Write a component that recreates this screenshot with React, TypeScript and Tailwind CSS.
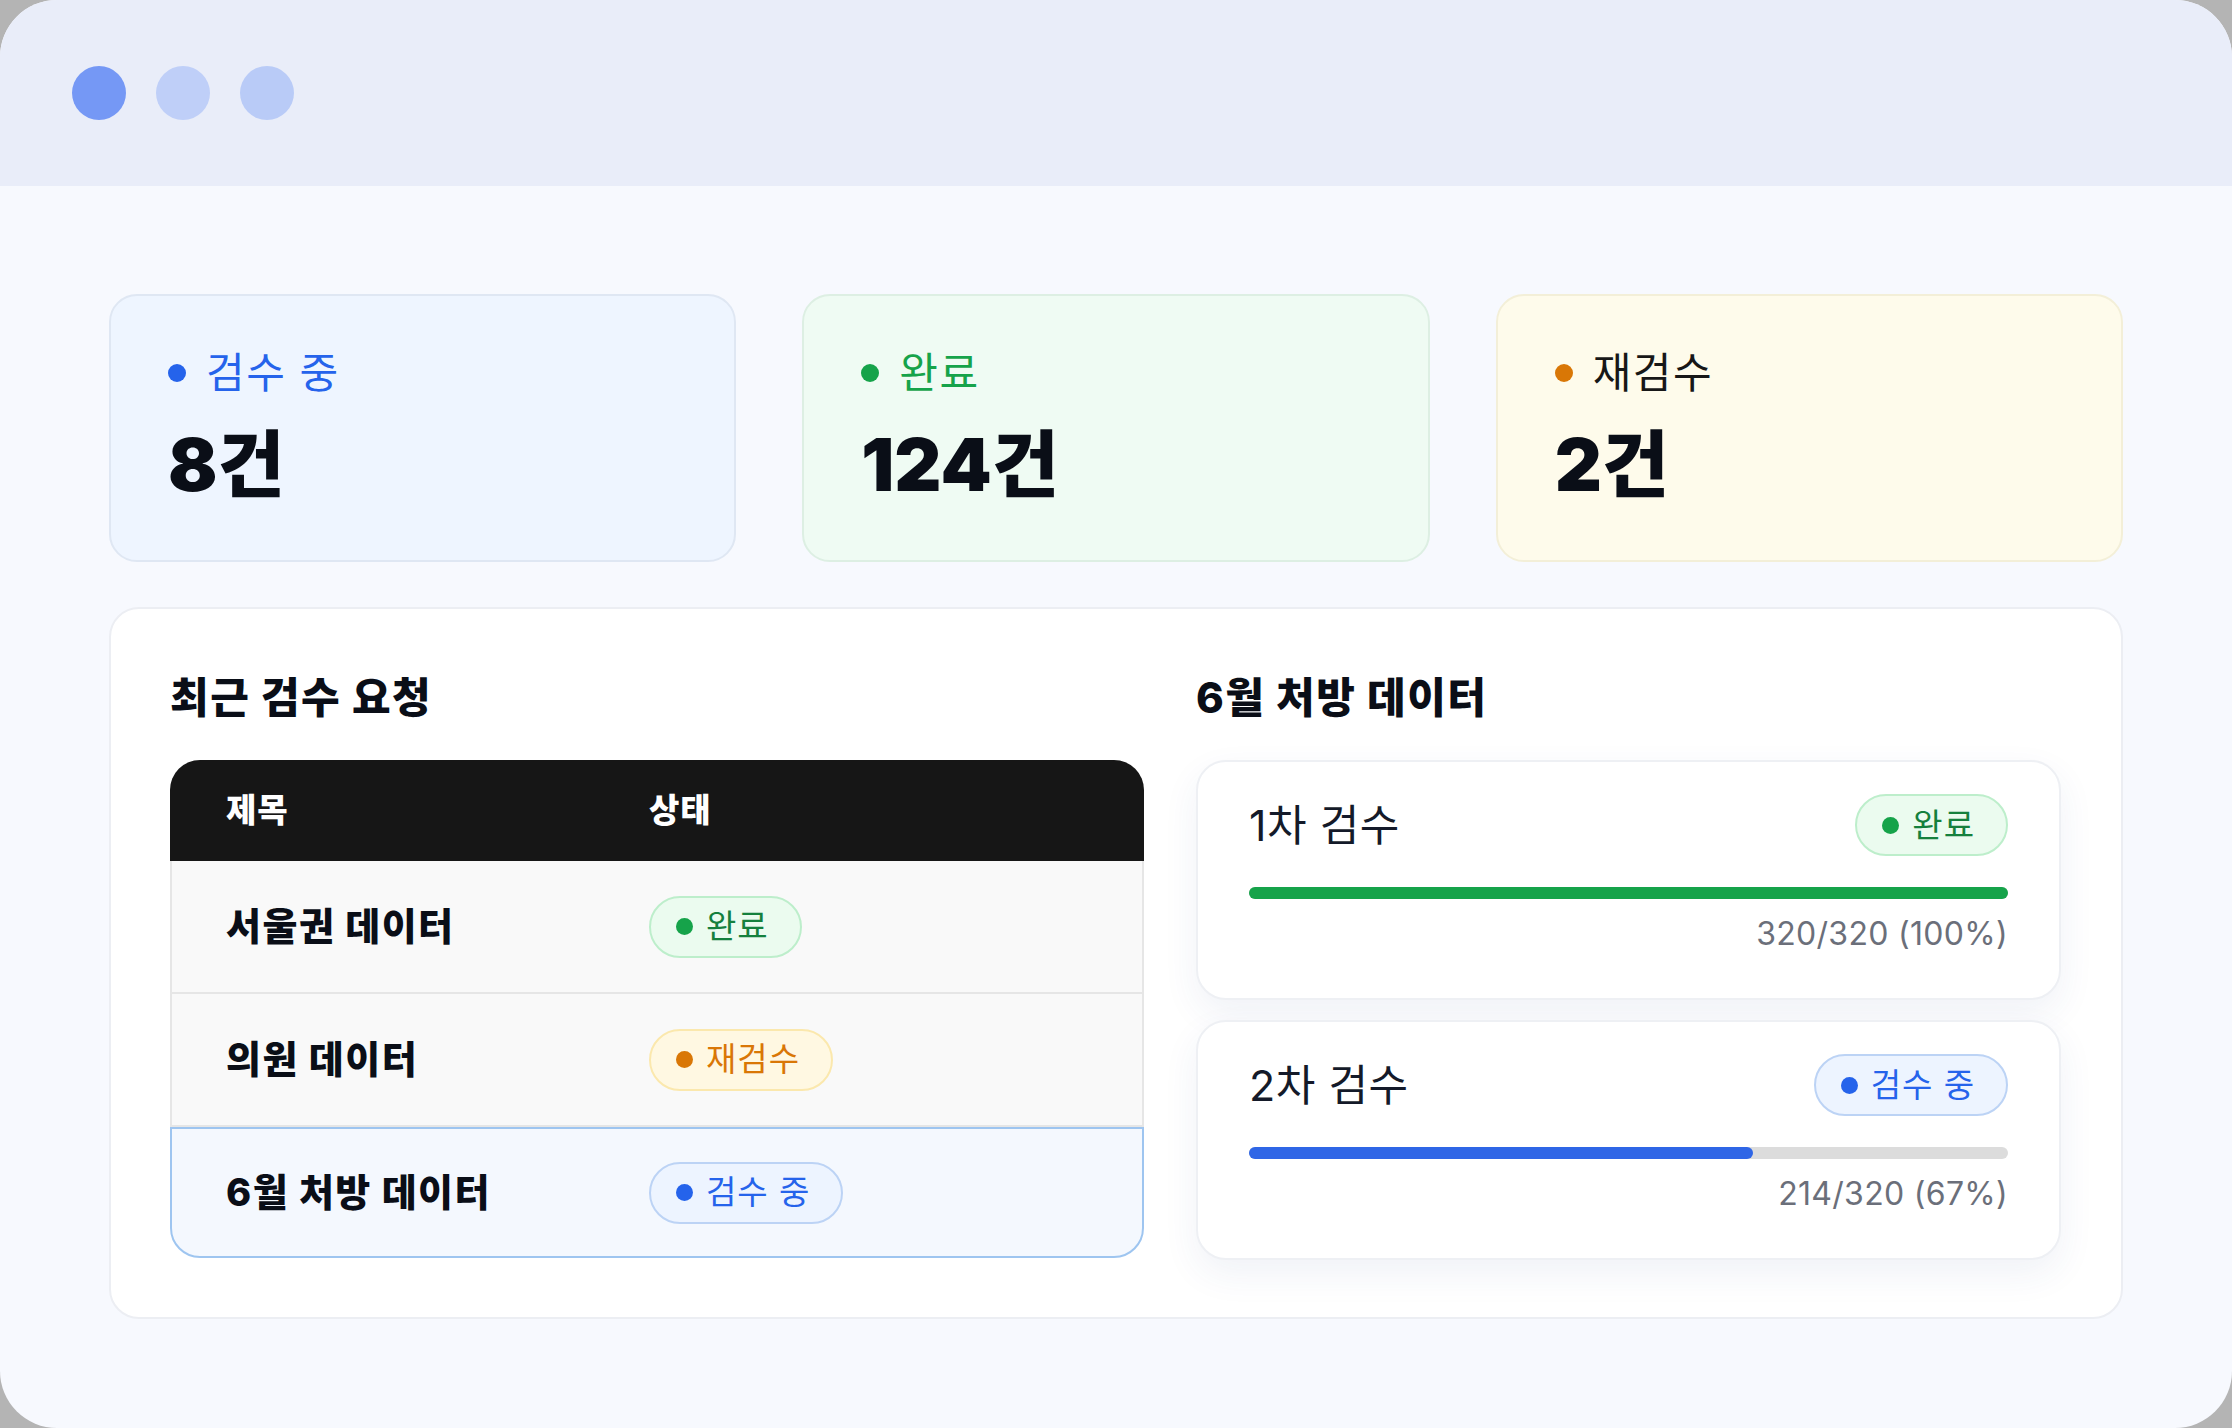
const font = { fontFamily: 'Inter, "Noto Sans CJK KR", "Noto Sans", sans-serif' };

type Tone = "green" | "amber" | "blue";

const badgeStyles: Record<Tone, { box: string; dot: string; text: string }> = {
  green: { box: "bg-[#ebfbef] border-[#bdeecb]", dot: "bg-[#16a34a]", text: "text-[#15803d]" },
  amber: { box: "bg-[#fff8e2] border-[#fbe8ad]", dot: "bg-[#d97706]", text: "text-[#d97706]" },
  blue: { box: "bg-[#edf4ff] border-[#bcd3f5]", dot: "bg-[#2563eb]", text: "text-[#2563eb]" },
};

function Badge({ tone, label }: { tone: Tone; label: string }) {
  const s = badgeStyles[tone];
  return (
    <span className={`inline-flex h-[62px] items-center gap-[13px] rounded-full border-2 pl-[25px] pr-[31px] ${s.box}`}>
      <span className={`h-[17px] w-[17px] rounded-full ${s.dot}`} />
      <span className={`text-[33px] leading-none tracking-[1px] ${s.text}`}>{label}</span>
    </span>
  );
}

function StatCard({ label, value, box, dot, text }: { label: string; value: string; box: string; dot: string; text: string }) {
  return (
    <div className={`h-[268px] rounded-[28px] border-2 pl-[57px] pt-[53px] ${box}`}>
      <div className="flex items-center gap-[20px]">
        <span className={`h-[18px] w-[18px] rounded-full ${dot}`} />
        <span className={`text-[42px] leading-[48px] tracking-[1.5px] ${text}`}>{label}</span>
      </div>
      <div className="mt-[28px] text-[73px] font-black leading-[80px] text-[#0a0e17]">{value}</div>
    </div>
  );
}

const rows: { title: string; tone: Tone; status: string }[] = [
  { title: "서울권 데이터", tone: "green", status: "완료" },
  { title: "의원 데이터", tone: "amber", status: "재검수" },
  { title: "6월 처방 데이터", tone: "blue", status: "검수 중" },
];

function ProgressCard({ title, tone, status, pct, caption, bar }: { title: string; tone: Tone; status: string; pct: number; caption: string; bar: string }) {
  return (
    <div className="rounded-[30px] border-2 border-[#eef0f4] bg-white px-[51px] pt-[32px] pb-[44px] shadow-[0_14px_36px_rgba(40,70,140,0.07)]">
      <div className="flex h-[62px] items-center justify-between">
        <span className="text-[43px] leading-none tracking-[0.5px] text-[#141a29]">{title}</span>
        <Badge tone={tone} label={status} />
      </div>
      <div className="mt-[31px] h-[12px] rounded-full bg-[#dcdcdc]">
        <div className={`h-full rounded-full ${bar}`} style={{ width: `${pct}%` }} />
      </div>
      <div className="mt-[15px] text-right text-[32px] leading-[40px] tracking-[0.3px] text-[#6b6f7a]">{caption}</div>
    </div>
  );
}

export default function App() {
  return (
    <div className="h-[1428px] w-[2232px] bg-[#b4b4b4]" style={font}>
      <div className="flex h-full flex-col overflow-hidden rounded-[57px] bg-[#f7f9fe]">
        <div className="flex h-[186px] shrink-0 items-center gap-[30px] bg-[#e9edf9] pl-[72px]">
          <span className="h-[54px] w-[54px] rounded-full bg-[#7598f5]" />
          <span className="h-[54px] w-[54px] rounded-full bg-[#bfcff8]" />
          <span className="h-[54px] w-[54px] rounded-full bg-[#b9cbf7]" />
        </div>

        <div className="px-[109px] pt-[108px]">
          <div className="grid grid-cols-3 gap-[66px]">
            <StatCard label="검수 중" value="8건" box="bg-[#eef5ff] border-[#dfe7f3]" dot="bg-[#2563eb]" text="text-[#2563eb]" />
            <StatCard label="완료" value="124건" box="bg-[#effbf3] border-[#ddefe3]" dot="bg-[#16a34a]" text="text-[#16a34a]" />
            <StatCard label="재검수" value="2건" box="bg-[#fefbeb] border-[#f3efd8]" dot="bg-[#d97706]" text="text-[#171717]" />
          </div>

          <div className="mt-[45px] rounded-[30px] border-2 border-[#eceef3] bg-white px-[59px] pt-[65px] pb-[57px]">
            <div className="grid grid-cols-[974px_865px] gap-[52px]">
              <div>
                <h2 className="mb-[38px] text-[42px] font-extrabold leading-[48px] tracking-[1.5px] text-[#0a0e17]">최근 검수 요청</h2>
                <div>
                  <div className="grid h-[101px] grid-cols-[423px_1fr] items-center rounded-t-[30px] bg-[#161616] pl-[56px] text-[33px] font-extrabold tracking-[1px] text-white">
                    <span>제목</span>
                    <span>상태</span>
                  </div>
                  {rows.map((r, i) => {
                    const last = i === rows.length - 1;
                    return (
                      <div
                        key={r.title}
                        className={
                          last
                            ? "grid h-[131px] grid-cols-[423px_1fr] items-center rounded-b-[30px] border-2 border-[#9ec5f0] bg-[#f4f8fe] pl-[54px]"
                            : "grid h-[133px] grid-cols-[423px_1fr] items-center border-x-2 border-b-2 border-[#e6e6e6] bg-[#f9f9f9] pl-[54px]"
                        }
                      >
                        <span className="text-[38px] font-extrabold tracking-[1.5px] text-[#0a0e17]">{r.title}</span>
                        <span>
                          <Badge tone={r.tone} label={r.status} />
                        </span>
                      </div>
                    );
                  })}
                </div>
              </div>

              <div>
                <h2 className="mb-[38px] text-[42px] font-extrabold leading-[48px] tracking-[1.5px] text-[#0a0e17]">6월 처방 데이터</h2>
                <div className="flex flex-col gap-[20px]">
                  <ProgressCard title="1차 검수" tone="green" status="완료" pct={100} caption="320/320 (100%)" bar="bg-[#16a34a]" />
                  <ProgressCard title="2차 검수" tone="blue" status="검수 중" pct={66.4} caption="214/320 (67%)" bar="bg-[#2f66e6]" />
                </div>
              </div>
            </div>
          </div>
        </div>
      </div>
    </div>
  );
}
